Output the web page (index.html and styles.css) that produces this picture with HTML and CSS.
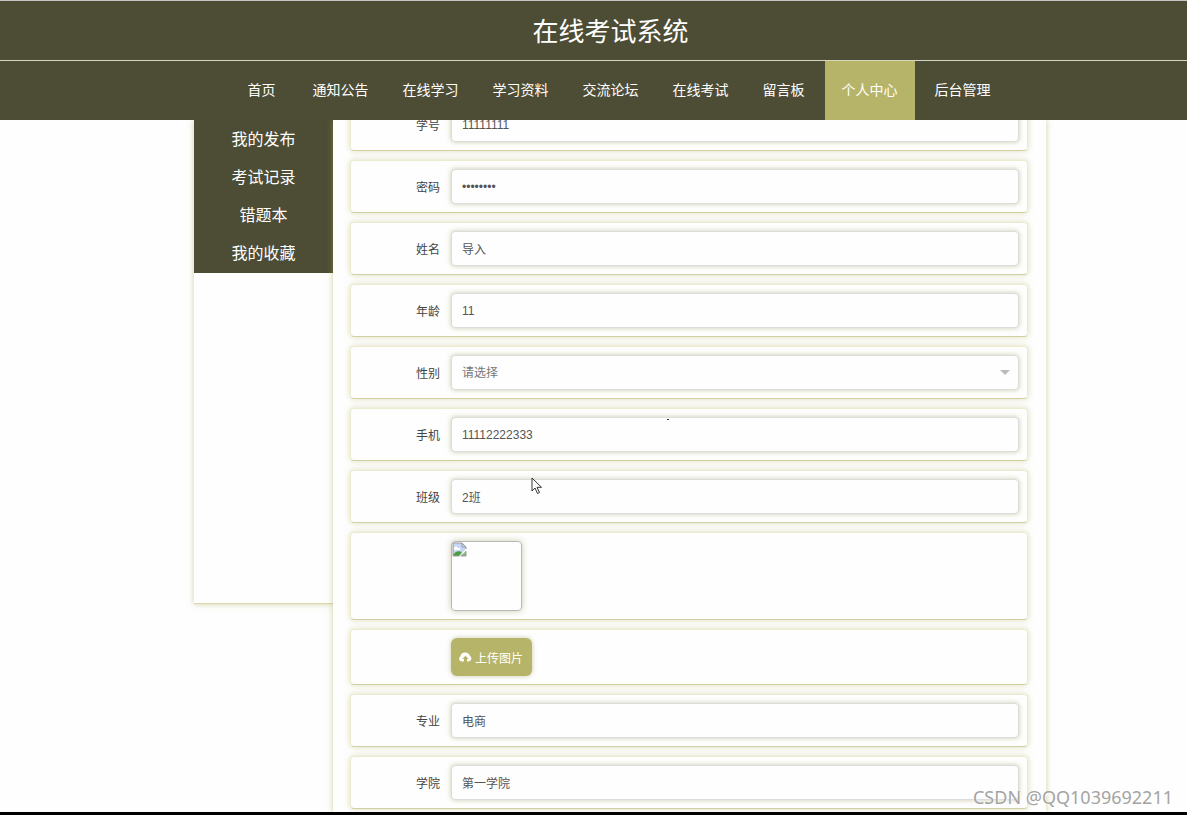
FILE: index.html
```html
<!DOCTYPE html>
<html lang="zh-CN">
<head>
<meta charset="utf-8">
<title>在线考试系统</title>
<link rel="stylesheet" href="styles.css">
</head>
<body>
<div class="page">
  <header class="header">
    <h1 class="title">在线考试系统</h1>
    <nav class="nav">
      <a class="nav-link first" href="#">首页</a>
      <a class="nav-link" href="#">通知公告</a>
      <a class="nav-link" href="#">在线学习</a>
      <a class="nav-link" href="#">学习资料</a>
      <a class="nav-link" href="#">交流论坛</a>
      <a class="nav-link" href="#">在线考试</a>
      <a class="nav-link" href="#">留言板</a>
      <a class="nav-link active" href="#">个人中心</a>
      <a class="nav-link" href="#">后台管理</a>
    </nav>
  </header>
  <main class="main">
    <div class="container">
      <aside class="sidebar">
        <div class="menu">
          <a class="menu-link" href="#">我的发布</a>
          <a class="menu-link" href="#">考试记录</a>
          <a class="menu-link" href="#">错题本</a>
          <a class="menu-link" href="#">我的收藏</a>
        </div>
      </aside>
      <section class="panel">
        <form class="form">
          <div class="row"><label class="label" for="no">学号</label><input class="field" id="no" type="text" value="11111111"></div>
          <div class="row"><label class="label" for="pw">密码</label><input class="field" id="pw" type="password" value="12345678"></div>
          <div class="row"><label class="label" for="name">姓名</label><input class="field" id="name" type="text" value="导入"></div>
          <div class="row"><label class="label" for="age">年龄</label><input class="field" id="age" type="text" value="11"></div>
          <div class="row"><label class="label" for="sex">性别</label><div class="select-box"><select class="field select" id="sex"><option>请选择</option></select></div></div>
          <div class="row"><label class="label" for="tel">手机</label><input class="field" id="tel" type="text" value="11112222333"></div>
          <div class="row"><label class="label" for="cls">班级</label><input class="field" id="cls" type="text" value="2班"></div>
          <div class="row"><span class="label"></span>
            <div class="avatar">
              <svg width="16" height="16" viewBox="0 0 16 16">
                <path d="M1 1h9l4 4v2l-3 3-3 4H1z" fill="#c5d7f2"/>
                <path d="M2 6c1-2 3-2 4 0h2v2H2z" fill="#fff"/>
                <path d="M1 14c1-4 5-6 9-4l-3 4z" fill="#4d9d3c"/>
                <path d="M8 14l6-5v5z" fill="#8fb488"/>
                <path d="M1 14V1h9l4 4v2M10 1v4h4M1 14h6M9 14h5V9" fill="none" stroke="#9a9a9e"/>
              </svg>
            </div>
          </div>
          <div class="row"><span class="label"></span>
            <button class="upload" type="button">
              <svg width="13" height="10" viewBox="0 0 13 10"><path fill="#fff" fill-rule="evenodd" d="M3 9.5A2.8 2.8 0 0 1 1.3 4.4 5 5 0 0 1 11 4 3 3 0 0 1 10 9.500H8V7h1.700L6.500 3.700 3.300 7H5v2.500z"/></svg>
              <span>上传图片</span>
            </button>
          </div>
          <div class="row"><label class="label" for="major">专业</label><input class="field" id="major" type="text" value="电商"></div>
          <div class="row"><label class="label" for="college">学院</label><input class="field" id="college" type="text" value="第一学院"></div>
        </form>
      </section>
    </div>
  </main>
  <footer class="bottom-bar"></footer>
  <svg class="cursor" width="12" height="18" viewBox="0 0 12 18"><path d="M1 1v13l3-3 2.500 5.500 2-1L6 10.300h4.500z" fill="#fff" stroke="#333"/></svg>
  <span class="speck"></span>
  <div class="watermark">CSDN @QQ1039692211</div>
</div>
</body>
</html>
```
FILE: styles.css
```css
* { box-sizing: border-box; }

body {
  margin: 0;
  background: #fefefe;
  color: #444;
  font-family: "Liberation Sans", "Noto Sans CJK SC", sans-serif;
  font-size: 12px;
}

a { color: #fff; text-decoration: none; }

.page {
  position: relative;
  display: flex;
  flex-direction: column;
  height: 100vh;
  overflow: hidden;
}

.header {
  flex: none;
  background: #4d4d35;
  border-top: 1px solid #c4c4c4;
}

.title {
  margin: 0;
  padding: 3px 0 0 34px;
  border-bottom: 1px solid #d6d6c0;
  color: #fff;
  font-size: 26px;
  font-weight: 400;
  line-height: 56px;
  text-align: center;
}

.nav {
  display: flex;
  justify-content: center;
  padding-left: 51px;
}

.nav-link {
  padding: 0 17px 1px;
  font-size: 14px;
  line-height: 58px;
}

.nav-link.first { padding-right: 20px; }

.nav-link.active {
  margin: 0 3px;
  background: #b6b468;
}

.main {
  flex: 1;
  min-height: 0;
  overflow: hidden;
  padding-left: 53px;
}

.container {
  display: flex;
  align-items: flex-start;
  max-width: 852px;
  height: 100%;
  margin: 0 auto;
}

.sidebar {
  flex: none;
  width: 139px;
  height: 484px;
  border-bottom: 1px solid #dcd6ac;
  box-shadow: 0 0 6px rgba(160, 160, 70, 0.5);
}

.menu {
  padding-top: 1px;
  background: #4d4d35;
}

.menu-link {
  display: block;
  font-size: 16px;
  line-height: 38px;
  text-align: center;
}

.panel {
  flex: 1;
  min-height: 100%;
  padding: 0 18px 0 17px;
  background: #fefefe;
  box-shadow: 0 0 6px rgba(160, 160, 70, 0.5);
}

.form {
  display: flex;
  flex-direction: column;
  gap: 9px;
  margin-top: -22px;
}

.row {
  display: flex;
  align-items: center;
  gap: 11px;
  padding: 8px;
  border: 1px solid #ecebd0;
  border-bottom-color: #d0d0a0;
  border-radius: 4px;
  background: #fefefe;
  box-shadow: 0 0 6px rgba(160, 160, 70, 0.35);
}

.label {
  flex: none;
  width: 81px;
  text-align: right;
}

.field {
  flex: 1;
  min-width: 0;
  height: 35px;
  padding: 0 10px;
  border: 1px solid #dcdcdc;
  border-radius: 4px;
  background: #fefefe;
  box-shadow: 0 0 5px rgba(140, 140, 70, 0.45);
  color: #555;
  font: inherit;
}

.select-box {
  position: relative;
  display: flex;
  flex: 1;
}

.select-box::after {
  content: "";
  position: absolute;
  top: 15px;
  right: 9px;
  border: 5px solid transparent;
  border-top-color: #bbb;
  border-bottom-width: 0;
}

.select { appearance: none; color: #777; }

.avatar {
  width: 71px;
  height: 70px;
  border: 1px solid #b8b8b8;
  border-radius: 4px;
  box-shadow: 0 0 6px rgba(140, 140, 70, 0.45);
}

.upload {
  display: flex;
  align-items: center;
  gap: 3px;
  height: 38px;
  padding: 0 9px 0 8px;
  border: 0;
  border-radius: 6px;
  background: #b6b468;
  box-shadow: 0 0 5px rgba(140, 140, 70, 0.45);
  color: #fff;
  font: inherit;
}

.bottom-bar {
  flex: none;
  height: 3px;
  background: #000;
}

.cursor {
  position: absolute;
  left: 531px;
  top: 477px;
}

.speck {
  position: absolute;
  left: 667px;
  top: 419px;
  width: 2px;
  height: 1px;
  background: #333;
}

.watermark {
  position: absolute;
  right: 14px;
  bottom: 6px;
  color: #a4a4a4;
  font-family: "Noto Sans", sans-serif;
  font-size: 18px;
  line-height: 24px;
  text-shadow: 1px 1px 0 #fff;
}
```
